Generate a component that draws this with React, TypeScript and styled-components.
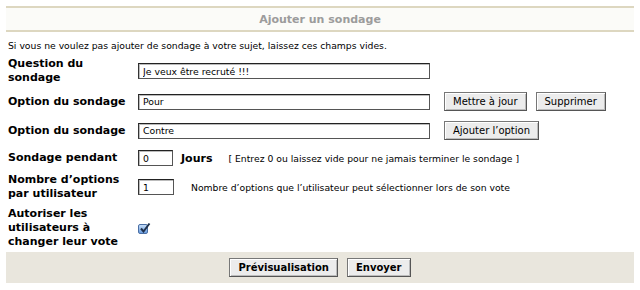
import React from 'react'
import styled, { createGlobalStyle } from 'styled-components'

const GlobalStyle = createGlobalStyle`
  html, body {
    margin: 0;
    padding: 0;
    background: #ffffff;
  }
  body {
    font-family: "DejaVu Sans", Verdana, sans-serif;
    color: #000;
  }
`

const PanelStyled = styled.div`
  width: 628px;
  margin: 6px 6px 0;
`

const HeaderStyled = styled.div`
  height: 22px;
  border-top: 2px solid #ddd7c0;
  border-bottom: 2px solid #ddd7c0;
  background: #fbfbf8;
  display: flex;
  align-items: center;
  justify-content: center;
  font-size: 11px;
  font-weight: bold;
  color: #9c9c9c;
`

const IntroStyled = styled.div`
  font-size: 9.25px;
  line-height: 12px;
  padding: 8px 2px 2px;
`

const FormGridStyled = styled.div`
  display: grid;
  grid-template-columns: 130px 1fr;
`

const LabelStyled = styled.div<{ $top: number; $bottom: number }>`
  font-size: 11px;
  font-weight: bold;
  line-height: 14px;
  padding: ${p => p.$top}px 2px ${p => p.$bottom}px;
  display: flex;
  align-items: center;
`

const FieldStyled = styled.div<{ $top: number; $bottom: number }>`
  display: flex;
  align-items: center;
  padding: ${p => p.$top}px 0 ${p => p.$bottom}px 2px;
`

const InputStyled = styled.input<{ $w: number }>`
  width: ${p => p.$w}px;
  height: 16px;
  box-sizing: border-box;
  border: 1px solid #555;
  border-top-color: #222;
  border-left-color: #333;
  box-shadow: inset 1px 1px 0 #bbb;
  padding: 0 4px;
  font-family: "DejaVu Sans", Verdana, sans-serif;
  font-size: 9.3px;
  color: #000;
  background: #fff;
  outline: none;
`

const ButtonGroupStyled = styled.div`
  display: flex;
  gap: 9px;
  margin-left: 14px;
`

const ButtonStyled = styled.button<{ $bold?: boolean }>`
  height: 19px;
  box-sizing: border-box;
  padding: 0 8px;
  border: 1px solid #555;
  border-top-color: #777;
  border-left-color: #777;
  box-shadow: inset 1px 1px 0 #fff, inset -1px -1px 0 #bcbcbc;
  background: #ececec;
  font-family: "DejaVu Sans", Verdana, sans-serif;
  font-size: 10px;
  font-weight: ${p => (p.$bold ? 'bold' : 'normal')};
  color: #000;
`

const UnitStyled = styled.span`
  font-size: 11px;
  font-weight: bold;
  margin: 0 16px 0 8px;
`

const NoteStyled = styled.span<{ $ml?: number }>`
  font-size: 9.25px;
  margin-left: ${p => p.$ml ?? 0}px;
`

const CheckStyled = styled.span`
  width: 10px;
  height: 10px;
  box-sizing: border-box;
  border: 1px solid #4a6fa5;
  border-radius: 2px;
  background: linear-gradient(#c4dcf7, #6b9ddf);
  position: relative;
  display: inline-block;
  margin-top: 2px;
  svg {
    position: absolute;
    left: -1px;
    top: -4px;
  }
`

const FooterStyled = styled.div`
  height: 31px;
  background: #e9e6dd;
  display: flex;
  align-items: center;
  justify-content: center;
  gap: 9px;
`

export default function App() {
  return (
    <>
      <GlobalStyle />
      <PanelStyled>
        <HeaderStyled>Ajouter un sondage</HeaderStyled>
        <IntroStyled>
          Si vous ne voulez pas ajouter de sondage à votre sujet, laissez ces champs vides.
        </IntroStyled>
        <FormGridStyled>
          <LabelStyled $top={3} $bottom={3}>Question du<br />sondage</LabelStyled>
          <FieldStyled $top={3} $bottom={3}>
            <InputStyled $w={292} defaultValue="Je veux être recruté !!!" />
          </FieldStyled>

          <LabelStyled $top={4} $bottom={6}>Option du sondage</LabelStyled>
          <FieldStyled $top={4} $bottom={6}>
            <InputStyled $w={292} defaultValue="Pour" />
            <ButtonGroupStyled>
              <ButtonStyled>Mettre à jour</ButtonStyled>
              <ButtonStyled>Supprimer</ButtonStyled>
            </ButtonGroupStyled>
          </FieldStyled>

          <LabelStyled $top={4} $bottom={6}>Option du sondage</LabelStyled>
          <FieldStyled $top={4} $bottom={6}>
            <InputStyled $w={292} defaultValue="Contre" />
            <ButtonGroupStyled>
              <ButtonStyled>Ajouter l’option</ButtonStyled>
            </ButtonGroupStyled>
          </FieldStyled>

          <LabelStyled $top={4} $bottom={4}>Sondage pendant</LabelStyled>
          <FieldStyled $top={4} $bottom={4}>
            <InputStyled $w={35} defaultValue="0" />
            <UnitStyled>Jours</UnitStyled>
            <NoteStyled>[ Entrez 0 ou laissez vide pour ne jamais terminer le sondage ]</NoteStyled>
          </FieldStyled>

          <LabelStyled $top={3} $bottom={3}>Nombre d’options<br />par utilisateur</LabelStyled>
          <FieldStyled $top={3} $bottom={3}>
            <InputStyled $w={36} defaultValue="1" />
            <NoteStyled $ml={17}>Nombre d’options que l’utilisateur peut sélectionner lors de son vote</NoteStyled>
          </FieldStyled>

          <LabelStyled $top={3} $bottom={3}>Autoriser les<br />utilisateurs à<br />changer leur vote</LabelStyled>
          <FieldStyled $top={3} $bottom={3}>
            <CheckStyled>
              <svg width="14" height="14" viewBox="0 0 14 14">
                <path d="M3 7.5 L5.5 10.5 L11.5 2.5" fill="none" stroke="#1d2f4a" strokeWidth="2" />
              </svg>
            </CheckStyled>
          </FieldStyled>
        </FormGridStyled>
        <FooterStyled>
          <ButtonStyled $bold>Prévisualisation</ButtonStyled>
          <ButtonStyled $bold>Envoyer</ButtonStyled>
        </FooterStyled>
      </PanelStyled>
    </>
  )
}
